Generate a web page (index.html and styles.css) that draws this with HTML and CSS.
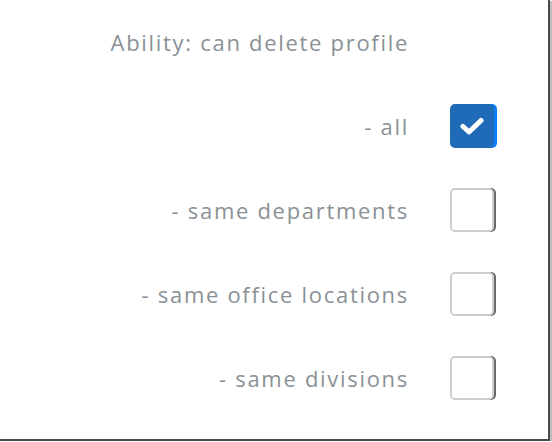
FILE: index.html
```html
<!DOCTYPE html>
<html lang="en">
<head>
  <meta charset="UTF-8">
  <title>Profile permissions</title>
  <link rel="stylesheet" href="styles.css">
</head>
<body>
  <div class="panel">
    <div class="perm-grid">
      <div class="perm-title">Ability: can delete profile</div>
      <div></div>

      <label class="perm-label" for="del-all">- all</label>
      <span class="check checked" id="del-all">
        <svg width="24" height="20" viewBox="0 0 24 20">
          <path d="M3 10.5 L9 16 L21 4.5" fill="none" stroke="#fff" stroke-width="5" stroke-linecap="round" stroke-linejoin="round"></path>
        </svg>
      </span>

      <label class="perm-label">- same departments</label>
      <span class="check"></span>

      <label class="perm-label">- same office locations</label>
      <span class="check"></span>

      <label class="perm-label">- same divisions</label>
      <span class="check"></span>
    </div>
  </div>
</body>
</html>
```

FILE: styles.css
```css
body {
  margin: 0;
  background: #fff;
  font-family: "Open Sans", "Lato", sans-serif;
}

.panel {
  width: 548px;
  height: 439px;
  background: #fff;
  border-right: 2px solid #4a4a4a;
  border-bottom: 2px solid #4a4a4a;
  box-shadow: 2px 1px 0 #bdbdbd;
}

.perm-grid {
  display: grid;
  grid-template-columns: auto 44px;
  grid-auto-rows: 84px;
  column-gap: 40px;
  justify-content: end;
  align-items: center;
  padding-right: 54px;
}

.perm-title,
.perm-label {
  color: #8a9196;
  font-size: 22px;
  text-align: right;
  letter-spacing: 1.7px;
  margin-right: 1px;
}

.check {
  box-sizing: border-box;
  width: 44px;
  height: 44px;
  border: 2px solid #cfcfcf;
  border-radius: 5px;
  background: #fff;
  box-shadow: 2px 0 0 #6a6a6a;
  display: flex;
  align-items: center;
  justify-content: center;
}

.check.checked {
  background: #1f6bb8;
  border-color: #1f6bb8;
  box-shadow: 3px 0 0 #0b7df7;
}
```
